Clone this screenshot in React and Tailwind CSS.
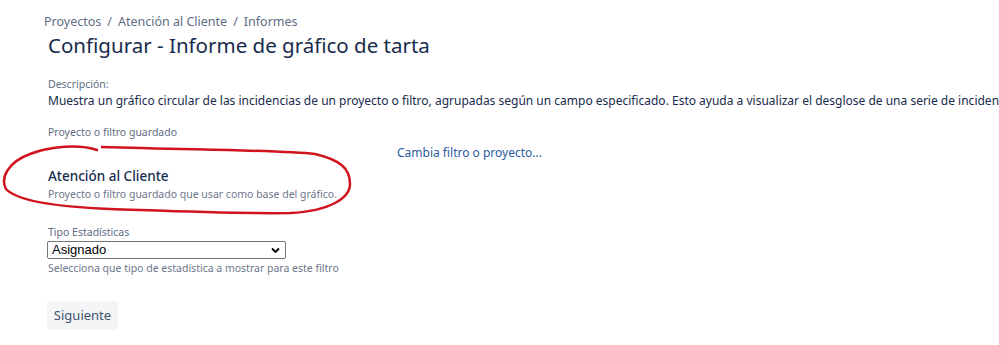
import React from "react";

function Annotation() {
  return (
    <svg className="absolute left-0 top-0 pointer-events-none" width="999" height="345" viewBox="0 0 999 345" fill="none">
      <path
        d="M97 150 C80 144 50 146 30 154 C8 162 0 178 6 189 C18 202 60 207 110 209 C170 211 240 214 290 213 C330 211 350 198 350 184 C350 168 340 160 315 154 C280 150 200 150 102 147"
        stroke="#d0131c"
        strokeWidth="2.5"
        strokeLinecap="round"
      />
    </svg>
  );
}

export default function App() {
  const [tipo, setTipo] = React.useState("Asignado");

  return (
    <div className="relative w-[999px] h-[345px] overflow-hidden bg-white font-['Noto_Sans',sans-serif] text-[#172b4d]">
      <div className="pl-[44px] pt-[13px]">
        <nav className="text-[12.5px] leading-[18px] text-[#5e6c84] flex gap-[6px]">
          <span>Proyectos</span>
          <span>/</span>
          <span>Atención al Cliente</span>
          <span>/</span>
          <span>Informes</span>
        </nav>
        <h1 className="ml-[4px] text-[20.5px] leading-[28px] font-normal whitespace-nowrap">
          Configurar - Informe de gráfico de tarta
        </h1>
      </div>

      <div className="pl-[48px] mt-[17px]">
        <p className="text-[10.5px] leading-[16px] text-[#5e6c84]">Descripción:</p>
        <p className="w-[951px] text-[12px] leading-[18px] whitespace-nowrap overflow-hidden">
          Muestra un gráfico circular de las incidencias de un proyecto o filtro, agrupadas según un campo especificado. Esto ayuda a visualizar el desglose de una serie de incidencias.
        </p>

        <p className="mt-[14px] text-[10.5px] leading-[16px] text-[#5e6c84]">Proyecto o filtro guardado</p>
        <div className="flex">
          <div className="w-[349px] pt-[26px]">
            <p className="text-[13.5px] leading-[20px] font-medium">Atención al Cliente</p>
            <p className="text-[10.5px] leading-[16px] text-[#6b778c]">Proyecto o filtro guardado que usar como base del gráfico.</p>
          </div>
          <a className="pt-[4px] text-[12px] leading-[18px] text-[#2c5aa0]" href="#">Cambia filtro o proyecto...</a>
        </div>

        <p className="mt-[22px] text-[10.5px] leading-[16px] text-[#5e6c84]">Tipo Estadísticas</p>
        <div className="relative w-[239px] h-[18px] mt-[1px] -ml-[1px]">
          <select
            value={tipo}
            onChange={e => setTipo(e.target.value)}
            className="appearance-none block w-full h-[18px] py-0 border border-[#767676] rounded-[2px] bg-white pl-[4px] text-[13px] leading-[16px] text-black font-['Liberation_Sans',sans-serif]"
          >
            <option>Asignado</option>
            <option>Informador</option>
            <option>Estado</option>
            <option>Prioridad</option>
          </select>
          <svg className="absolute right-[6px] top-[6px] pointer-events-none" width="9" height="7" viewBox="0 0 9 7">
            <path d="M1 1.5 L4.5 5 L8 1.5" stroke="#000" strokeWidth="1.8" fill="none" />
          </svg>
        </div>
        <p className="mt-[1px] text-[10.5px] leading-[16px] text-[#6b778c]">Selecciona que tipo de estadística a mostrar para este filtro</p>

        <button className="block mt-[25px] -ml-[1px] h-[29px] w-[71px] rounded-[3px] bg-[#f4f5f7] text-[13px] text-[#42526e]">
          Siguiente
        </button>
      </div>

      <Annotation />
    </div>
  );
}
